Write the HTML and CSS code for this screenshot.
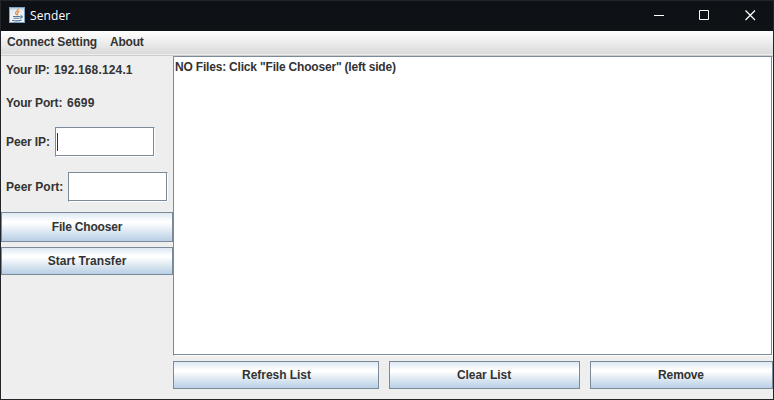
FILE: index.html
```html
<!DOCTYPE html>
<html lang="en">
<head>
<meta charset="utf-8">
<title>Sender</title>
<link rel="stylesheet" href="styles.css">
</head>
<body>
<div class="window">
  <header class="titlebar">
    <svg class="logo" width="16" height="16" viewBox="0 0 16 16">
      <defs><linearGradient id="tile" x1="0" y1="0" x2="0" y2="1"><stop offset="0" stop-color="#a9c6dc"/><stop offset=".2" stop-color="#e4edf2"/><stop offset="1" stop-color="#f8f8f5"/></linearGradient></defs>
      <rect x=".5" y=".5" width="15" height="15" fill="url(#tile)" stroke="#7fa3bf"/>
      <path d="M9.4 1.7C9.4 3.8 6.2 4.4 6.5 6.2C6.7 7 7.6 7.2 7.5 8.2M10.4 4.3C8.8 5 8.2 5.7 8.7 6.6C9 7.2 8.7 7.6 8.4 8.1" fill="none" stroke="#e8812f" stroke-width="1.1"/>
      <path d="M4 9.5H11M4.6 11.2H10.4M11 9.2C14.2 8.3 14 10.5 11 11.2M3 13.2C5 14.1 10 14.1 12.6 13" fill="none" stroke="#52799c" stroke-width="1.1"/>
    </svg>
    <span class="title">Sender</span>
    <svg class="controls" width="106" height="12" viewBox="0 0 106 12">
      <path d="M0 5.5H10M45.5 .5H54.5V9.5H45.5Z" fill="none" stroke="#fff"/>
      <path d="M91.5 .5L101 10M101 .5L91.5 10" fill="none" stroke="#fff" stroke-width="1.2"/>
    </svg>
  </header>
  <nav class="menubar"><span class="menu-connect">Connect Setting</span><span class="menu-about">About</span></nav>
  <main class="content">
    <aside class="sidebar">
      <div class="row ip"><span class="label-ip">Your IP:</span><span class="address">192.168.124.1</span></div>
      <div class="row port"><span class="label-port">Your Port:</span><span class="port-number">6699</span></div>
      <div class="row peer"><span class="label-peer">Peer IP:</span><div class="field"><i class="caret"></i></div></div>
      <div class="row peer peer-port"><span class="label-peer-port">Peer Port:</span><div class="field"></div></div>
      <div class="button choose"><span>File Chooser</span></div>
      <div class="button start"><span>Start Transfer</span></div>
    </aside>
    <section class="files">
      <div class="field list"><span>NO Files: Click "File Chooser" (left side)</span></div>
      <div class="actions">
        <div class="button refresh"><span>Refresh List</span></div>
        <div class="button clear"><span>Clear List</span></div>
        <div class="button remove"><span>Remove</span></div>
      </div>
    </section>
  </main>
</div>
</body>
</html>
```
FILE: styles.css
```css
* { box-sizing: border-box; }
body { margin: 0; }
.window {
  width: 774px;
  height: 400px;
  display: flex;
  flex-direction: column;
  border: 1px solid #23252a;
  background: #eee;
  color: #333;
  font: bold 12px/14px "Liberation Sans", Arial, sans-serif;
  white-space: nowrap;
  overflow: hidden;
}
.titlebar {
  height: 30px;
  display: flex;
  align-items: center;
  padding: 0 18px 0 8px;
  background: #0e1216;
  color: #fff;
}
.logo { margin-top: -2px; }
.title { margin-left: 5px; font: 12px/16px "Open Sans", sans-serif; letter-spacing: 0.1px; }
.controls { margin: 0 -5px 0 auto; }
.menubar {
  height: 25px;
  flex: none;
  display: flex;
  padding: 4px 6px 0;
  background: linear-gradient(#fff, #dadada 23px, #eee 23px);
  border-bottom: 1px solid #ccc;
}
.menu-connect { width: 103px; letter-spacing: -0.13px; }
.menu-about { letter-spacing: -0.2px; }
.content { flex: 1; display: flex; min-height: 0; }
.sidebar { width: 172px; flex: none; display: flex; flex-direction: column; }
.row { display: flex; align-items: center; padding-left: 5px; }
.ip { height: 14px; margin-top: 7px; }
.port { height: 14px; margin-top: 19px; }
.peer { height: 30px; margin-top: 17px; }
.peer-port { margin-top: 15px; }
.label-ip { width: 48px; letter-spacing: -0.2px; }
.address { letter-spacing: 0.15px; }
.label-port { width: 61px; letter-spacing: -0.15px; }
.port-number { letter-spacing: 0.25px; }
.label-peer { width: 49px; letter-spacing: -0.1px; }
.label-peer-port { width: 62px; }
.field {
  width: 100px;
  height: 30px;
  position: relative;
  background: #fff;
  border: 1px solid #7a8a99;
  border-right-color: #fff;
  border-bottom-color: #fff;
}
.field::after {
  content: "";
  position: absolute;
  inset: 0;
  border-right: 1px solid #7a8a99;
  border-bottom: 1px solid #7a8a99;
}
.caret { display: block; width: 1px; height: 18px; margin: 5px 0 0 1px; background: #333; }
.button {
  height: 28px;
  display: flex;
  align-items: center;
  justify-content: center;
  border: 1px solid #7a8a99;
  background: linear-gradient(#dde8f3 0%, #fff 30%, #fff 35%, #b8cfe5 100%);
}
.choose { height: 30px; margin-top: 10px; letter-spacing: -0.2px; }
.start { margin-top: 5px; letter-spacing: 0.05px; }
.files { width: 600px; flex: none; }
.list { width: 600px; height: 300px; padding: 3px 0 0 1px; letter-spacing: -0.19px; }
.actions { display: flex; gap: 10px; margin-top: 5px; }
.refresh { width: 206px; padding-left: 1px; letter-spacing: -0.05px; }
.clear { width: 191px; padding-right: 1px; letter-spacing: -0.05px; }
.remove { width: 183px; letter-spacing: -0.15px; padding-right: 1px; }
```
